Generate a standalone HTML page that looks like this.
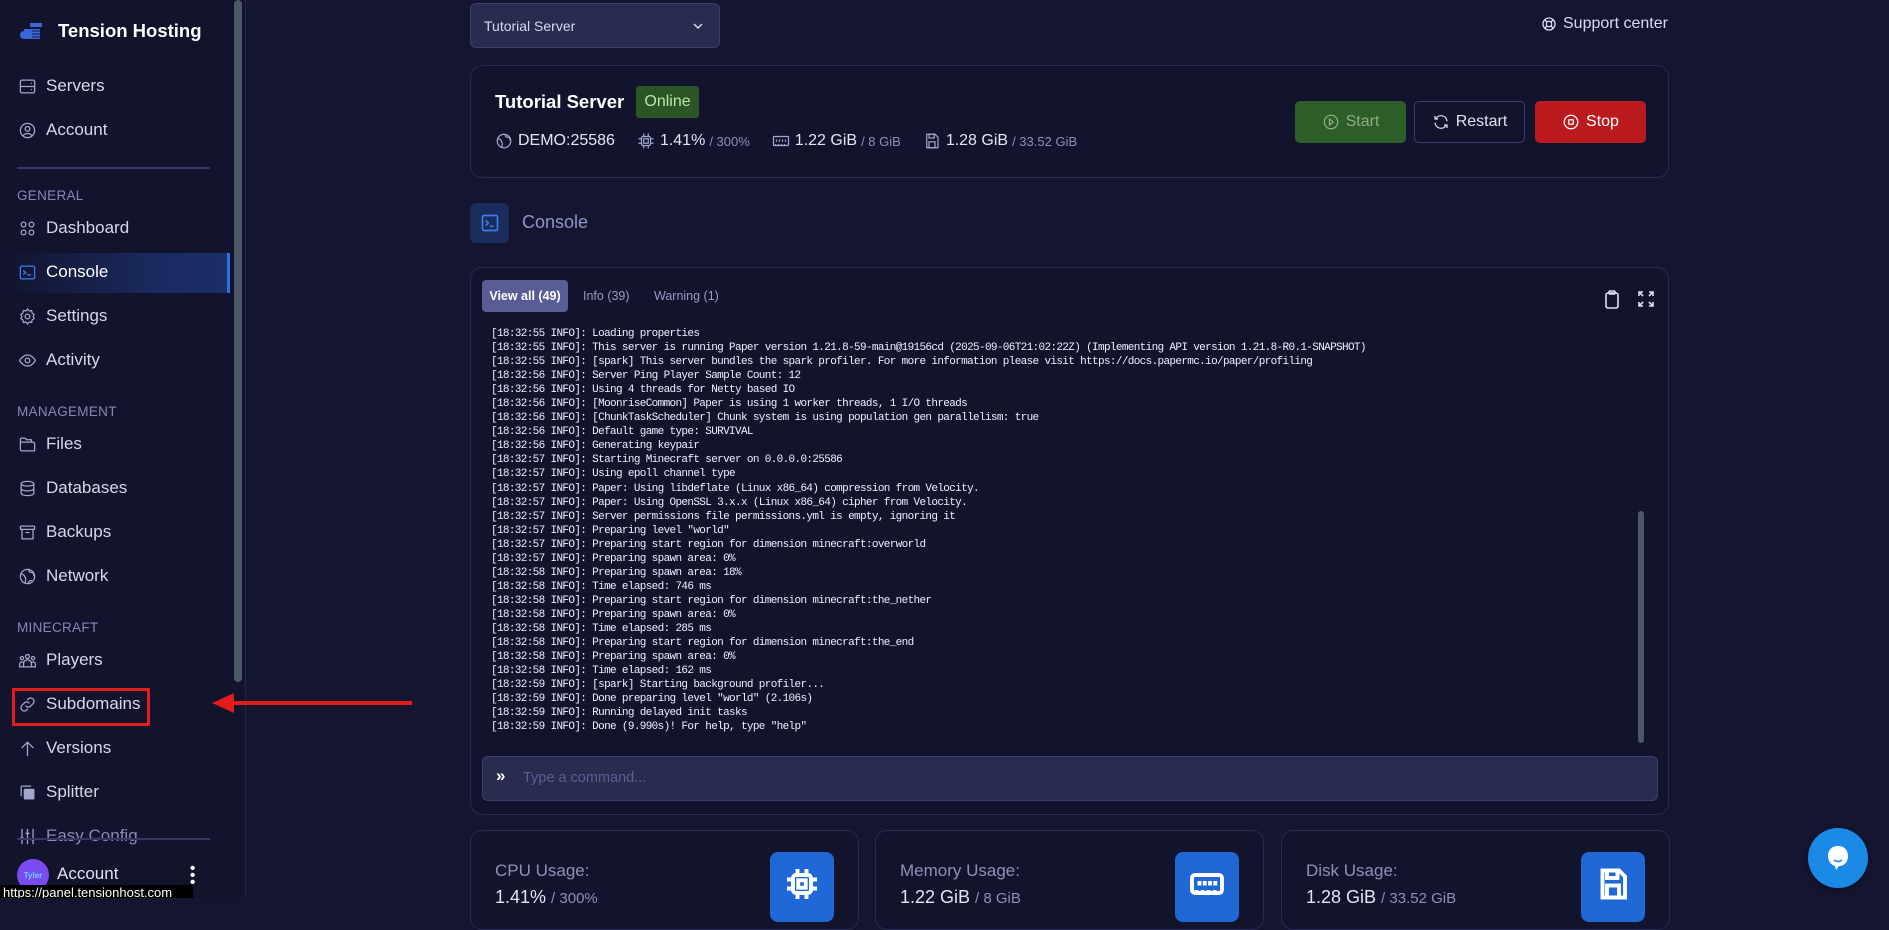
<!DOCTYPE html>
<html><head><meta charset="utf-8"><style>
*{box-sizing:border-box;margin:0;padding:0}
body{width:1889px;height:898px;overflow:hidden;background:#141631;font-family:"Liberation Sans",sans-serif;color:#e4e5f4;position:relative}
.a{position:absolute}
#sb{left:0;top:0;width:246px;height:898px;background:#12132c;border-right:1px solid #23254a}
.it{position:absolute;left:0;width:230px;height:40px;display:flex;align-items:center;padding-left:18px;font-size:17px;color:#d6d8ec}
.it svg{width:19px;height:19px;margin-right:9px;stroke:#a4a7cc;fill:none;stroke-width:1.6;stroke-linecap:round;stroke-linejoin:round}
.sec{position:absolute;left:17px;font-size:13.5px;color:#8688b4;letter-spacing:.3px}
.card{position:absolute;background:#12142e;border:1px solid #272a4e;border-radius:12px}
.st{display:flex;align-items:center;font-size:16px;color:#e4e5f4;margin-right:22px}
.st small{font-size:13px;color:#8e90b4;margin-left:4px}
.st svg{width:18px;height:18px;stroke:#a4a7cc;fill:none;stroke-width:1.6;margin-right:5px}
.btn{position:absolute;top:101px;height:42px;width:111px;border-radius:5px;display:flex;align-items:center;justify-content:center;font-size:16px}
.btn svg{width:18px;height:18px;fill:none;stroke-width:1.7;margin-right:6px}
#log{left:491px;top:327px;font-family:"Liberation Mono",monospace;font-size:11px;line-height:14.04px;letter-spacing:-.65px;color:#eef0ff;white-space:pre}
.sc{position:absolute;top:830px;height:100px;width:389px}
.sc .l{position:absolute;left:24px;top:30px;font-size:17px;color:#8e90b8}
.sc .v{position:absolute;left:24px;top:56px;font-size:18px;color:#e4e5f4}
.sc .v small{font-size:15px;color:#8e90b4}
.sc .ib{position:absolute;right:24px;top:21px;width:64px;height:70px;background:#2068d6;border-radius:8px;display:flex;justify-content:center;padding-top:14px}
.sc .ib svg{width:36px;height:36px;stroke:#fff;fill:none;stroke-width:2.6}
</style></head><body>
<div id="sb" class="a">
 <div class="a" style="left:20px;top:20px;display:flex;align-items:center">
  <svg width="24" height="20" viewBox="0 0 24 20"><path d="M4 8h16v10H4a4 4 0 0 1 0-8z" fill="#3a66d8"/><rect x="10" y="2" width="12" height="4" fill="#3a66d8"/><path d="M12 10h8M12 13h8M12 16h8" stroke="#1d2a66" stroke-width="1.3"/></svg>
  <span style="margin-left:14px;font-weight:bold;font-size:18.5px;color:#fff">Tension Hosting</span></div>
 <div class="it" style="top:66px"><svg viewBox="0 0 24 24"><rect x="3" y="4" width="18" height="16" rx="2"/><path d="M3 12h18M17 8h.01M17 16h.01"/></svg>Servers</div>
 <div class="it" style="top:110px"><svg viewBox="0 0 24 24"><circle cx="12" cy="12" r="9"/><circle cx="12" cy="10" r="3"/><path d="M6.5 18.5a7 7 0 0 1 11 0"/></svg>Account</div>
 <div class="a" style="left:17px;top:167px;width:193px;height:2px;background:#363862"></div>
 <div class="sec" style="top:188px">GENERAL</div>
 <div class="it" style="top:208px"><svg viewBox="0 0 24 24"><circle cx="7" cy="7" r="3"/><circle cx="17" cy="7" r="3"/><circle cx="7" cy="17" r="3"/><circle cx="17" cy="17" r="3"/></svg>Dashboard</div>
 <div class="a" style="left:0;top:253px;width:230px;height:40px;background:linear-gradient(90deg,#12132c 0%,#1a2a60 70%,#1b2e66 100%);border-right:3px solid #2f6ee6"></div>
 <div class="it" style="top:252px;color:#fff"><svg viewBox="0 0 24 24" style="stroke:#3d7cf0"><rect x="3" y="4" width="18" height="16" rx="2"/><path d="M7 10l3 2-3 2M12 15h4"/></svg>Console</div>
 <div class="it" style="top:296px"><svg viewBox="0 0 24 24"><circle cx="12" cy="12" r="3"/><path d="M12 2.5l2 2.5 3.2-.6.6 3.2 2.7 1.9-1.4 2.5 1.4 2.5-2.7 1.9-.6 3.2-3.2-.6-2 2.5-2-2.5-3.2.6-.6-3.2-2.7-1.9 1.4-2.5-1.4-2.5 2.7-1.9.6-3.2 3.2.6z"/></svg>Settings</div>
 <div class="it" style="top:340px"><svg viewBox="0 0 24 24"><path d="M2 12s4-7 10-7 10 7 10 7-4 7-10 7S2 12 2 12z"/><circle cx="12" cy="12" r="3"/></svg>Activity</div>
 <div class="sec" style="top:404px">MANAGEMENT</div>
 <div class="it" style="top:424px"><svg viewBox="0 0 24 24"><path d="M3 8V6a2 2 0 0 1 2-2h4l2 2h6v2M5 20a2 2 0 0 1-2-2V9h16a2 2 0 0 1 2 2v9z"/></svg>Files</div>
 <div class="it" style="top:468px"><svg viewBox="0 0 24 24"><ellipse cx="12" cy="6" rx="8" ry="3"/><path d="M4 6v12c0 1.7 3.6 3 8 3s8-1.3 8-3V6M4 12c0 1.7 3.6 3 8 3s8-1.3 8-3"/></svg>Databases</div>
 <div class="it" style="top:512px"><svg viewBox="0 0 24 24"><rect x="3" y="4" width="18" height="4" rx="1"/><path d="M5 8v12h14V8M10 12h4"/></svg>Backups</div>
 <div class="it" style="top:556px"><svg viewBox="0 0 24 24"><circle cx="12" cy="12" r="9"/><path d="M4 9c3 0 4 2 5 4s1 4 0 7M14 3c-1 3 1 4 3 4s3 2 3 4M13 21c0-3 2-4 4-4"/></svg>Network</div>
 <div class="sec" style="top:620px">MINECRAFT</div>
 <div class="it" style="top:640px"><svg viewBox="0 0 24 24"><circle cx="12" cy="7" r="2.5"/><circle cx="5" cy="9" r="2"/><circle cx="19" cy="9" r="2"/><path d="M7 20v-4a5 5 0 0 1 10 0v4zM2 20v-3a3 3 0 0 1 4-3M22 20v-3a3 3 0 0 0-4-3M2 20h20"/></svg>Players</div>
 <div class="it" style="top:684px"><svg viewBox="0 0 24 24"><path d="M10 14a4 4 0 0 0 6 0l3-3a4 4 0 0 0-6-6l-1 1M14 10a4 4 0 0 0-6 0l-3 3a4 4 0 0 0 6 6l1-1"/></svg>Subdomains</div>
 <div class="a" style="left:12px;top:688px;width:138px;height:38px;border:3px solid #e21b1b"></div>
 <div class="it" style="top:728px"><svg viewBox="0 0 24 24"><path d="M12 21V4M5 11l7-7 7 7"/></svg>Versions</div>
 <div class="it" style="top:772px"><svg viewBox="0 0 24 24"><path d="M4 16V5a1 1 0 0 1 1-1h11" /><rect x="8" y="8" width="12" height="12" rx="1" fill="#a4a7cc"/></svg>Splitter</div>
 <div class="it" style="top:816px;color:#8a8cb0"><svg viewBox="0 0 24 24"><path d="M5 3v18M12 3v18M19 3v18M3 14h4M10 8h4M17 16h4"/></svg>Easy Config</div>
 <div class="a" style="left:17px;top:838px;width:193px;height:2px;background:#363862"></div>
 <div class="a" style="left:17px;top:859px;width:32px;height:32px;border-radius:50%;background:#7a4cf0;font-size:8px;font-weight:bold;color:#6ad0ff;display:flex;align-items:center;justify-content:center">Tyler</div>
 <div class="a" style="left:57px;top:864px;font-size:17px;color:#e0e2f2">Account</div>
 <div class="a" style="left:190px;top:865px;width:4px;line-height:7px;font-size:15px;font-weight:bold;color:#fff">•<br>•<br>•</div>
 <div class="a" style="left:234px;top:0;width:8px;height:682px;border-radius:4px;background:#4d5867"></div>
</div>
<div class="a" style="left:0;top:885px;width:193px;height:13px;background:#000;color:#fff;font-size:13px;line-height:16px;padding-left:3px;overflow:hidden">https://panel.tensionhost.com</div>
<!-- red arrow -->
<svg class="a" style="left:210px;top:692px" width="205" height="22"><path d="M22 11H202" stroke="#e21b1b" stroke-width="4"/><path d="M2 11L24 1V21z" fill="#e21b1b"/></svg>

<!-- top -->
<div class="a" style="left:470px;top:3px;width:250px;height:45px;background:#292b4f;border:1px solid #3c3e6c;border-radius:6px;font-size:14px;color:#d8daf0;padding:14px 0 0 13px">Tutorial Server<svg class="a" style="left:222px;top:18px" width="10" height="8"><path d="M1 2l4 4 4-4" stroke="#d8daf0" stroke-width="1.5" fill="none"/></svg></div>
<div class="a" style="left:1541px;top:15px;font-size:16px;color:#d8daf0;display:flex;align-items:center"><svg width="16" height="16" viewBox="0 0 24 24" style="margin-right:6px;fill:none;stroke:#d8daf0;stroke-width:2"><circle cx="12" cy="12" r="9"/><circle cx="12" cy="12" r="4"/><path d="M5.6 5.6l3.6 3.6M18.4 5.6l-3.6 3.6M5.6 18.4l3.6-3.6M18.4 18.4l-3.6-3.6"/></svg>Support center</div>

<div class="card" style="left:470px;top:65px;width:1199px;height:113px"></div>
<div class="a" style="left:495px;top:91px;font-size:18.5px;font-weight:bold;color:#fff">Tutorial Server</div>
<div class="a" style="left:636px;top:86px;width:63px;height:32px;background:#2b5427;border-radius:3px;color:#b9e7a9;font-size:16px;display:flex;align-items:center;justify-content:center">Online</div>
<div class="a" style="left:495px;top:132px;display:flex">
 <div class="st"><svg viewBox="0 0 24 24"><circle cx="12" cy="12" r="9"/><path d="M4 9c3 0 4 2 5 4s1 4 0 7M14 3c-1 3 1 4 3 4s3 2 3 4"/></svg>DEMO:25586</div>
 <div class="st"><svg viewBox="0 0 24 24"><rect x="6" y="6" width="12" height="12" rx="2"/><rect x="9" y="9" width="6" height="6"/><path d="M9 2v4M15 2v4M9 18v4M15 18v4M2 9h4M2 15h4M18 9h4M18 15h4"/></svg>1.41%<small>/ 300%</small></div>
 <div class="st"><svg viewBox="0 0 24 24"><rect x="2" y="6" width="20" height="12" rx="1"/><path d="M6 10v3M10 10v3M14 10v3M18 10v3M5 18v-2M9 18v-2M13 18v-2M17 18v-2"/></svg>1.22 GiB<small>/ 8 GiB</small></div>
 <div class="st"><svg viewBox="0 0 24 24"><path d="M5 3h11l4 4v14H5z"/><rect x="8" y="3" width="7" height="5"/><rect x="8" y="13" width="8" height="8"/></svg>1.28 GiB<small>/ 33.52 GiB</small></div>
</div>
<div class="btn" style="left:1295px;background:#2d5e27;color:#8fa98a"><svg viewBox="0 0 24 24" stroke="#8fa98a"><circle cx="12" cy="12" r="9"/><path d="M10 8l5 4-5 4z"/></svg>Start</div>
<div class="btn" style="left:1414px;border:1px solid #3c3e6c;color:#e0e2f2"><svg viewBox="0 0 24 24" stroke="#e0e2f2"><path d="M20 11A8 8 0 0 0 5.5 7M4 4v4h4M4 13a8 8 0 0 0 14.5 4M20 20v-4h-4"/></svg>Restart</div>
<div class="btn" style="left:1535px;background:#bb1a1e;color:#fff"><svg viewBox="0 0 24 24" stroke="#fff"><circle cx="12" cy="12" r="9"/><rect x="9" y="9" width="6" height="6" rx="1"/></svg>Stop</div>

<div class="a" style="left:470px;top:203px;width:39px;height:40px;background:#1b2c5c;border-radius:6px"><svg style="margin:10px 0 0 10px" width="20" height="20" viewBox="0 0 24 24" fill="none" stroke="#3d7cf0" stroke-width="2"><rect x="3" y="3" width="18" height="18" rx="2"/><path d="M7 9l3 3-3 3M12 16h4"/></svg></div>
<div class="a" style="left:522px;top:212px;font-size:18px;color:#9294c6">Console</div>

<div class="card" style="left:470px;top:267px;width:1199px;height:548px"></div>
<div class="a" style="left:482px;top:280px;width:86px;height:32px;background:#5a5c96;border-radius:4px;color:#fff;font-size:12.5px;font-weight:bold;display:flex;align-items:center;justify-content:center">View all (49)</div>
<div class="a" style="left:583px;top:289px;font-size:12.5px;color:#9698c4">Info (39)</div>
<div class="a" style="left:654px;top:289px;font-size:12.5px;color:#9698c4">Warning (1)</div>
<svg class="a" style="left:1604px;top:290px" width="16" height="19" viewBox="0 0 16 19" fill="none" stroke="#e0e2f2" stroke-width="1.6"><rect x="2" y="3" width="12" height="15" rx="2"/><rect x="5" y="1" width="6" height="3" rx="1"/></svg>
<svg class="a" style="left:1638px;top:291px" width="16" height="16" viewBox="0 0 16 16" fill="none" stroke="#e0e2f2" stroke-width="1.6"><path d="M1 5V1h4M1 1l4 4M15 5V1h-4M15 1l-4 4M1 11v4h4M1 15l4-4M15 11v4h-4M15 15l-4-4"/></svg>
<div id="log" class="a">[18:32:55 INFO]: Loading properties
[18:32:55 INFO]: This server is running Paper version 1.21.8-59-main@19156cd (2025-09-06T21:02:22Z) (Implementing API version 1.21.8-R0.1-SNAPSHOT)
[18:32:55 INFO]: [spark] This server bundles the spark profiler. For more information please visit https://docs.papermc.io/paper/profiling
[18:32:56 INFO]: Server Ping Player Sample Count: 12
[18:32:56 INFO]: Using 4 threads for Netty based IO
[18:32:56 INFO]: [MoonriseCommon] Paper is using 1 worker threads, 1 I/O threads
[18:32:56 INFO]: [ChunkTaskScheduler] Chunk system is using population gen parallelism: true
[18:32:56 INFO]: Default game type: SURVIVAL
[18:32:56 INFO]: Generating keypair
[18:32:57 INFO]: Starting Minecraft server on 0.0.0.0:25586
[18:32:57 INFO]: Using epoll channel type
[18:32:57 INFO]: Paper: Using libdeflate (Linux x86_64) compression from Velocity.
[18:32:57 INFO]: Paper: Using OpenSSL 3.x.x (Linux x86_64) cipher from Velocity.
[18:32:57 INFO]: Server permissions file permissions.yml is empty, ignoring it
[18:32:57 INFO]: Preparing level "world"
[18:32:57 INFO]: Preparing start region for dimension minecraft:overworld
[18:32:57 INFO]: Preparing spawn area: 0%
[18:32:58 INFO]: Preparing spawn area: 18%
[18:32:58 INFO]: Time elapsed: 746 ms
[18:32:58 INFO]: Preparing start region for dimension minecraft:the_nether
[18:32:58 INFO]: Preparing spawn area: 0%
[18:32:58 INFO]: Time elapsed: 285 ms
[18:32:58 INFO]: Preparing start region for dimension minecraft:the_end
[18:32:58 INFO]: Preparing spawn area: 0%
[18:32:58 INFO]: Time elapsed: 162 ms
[18:32:59 INFO]: [spark] Starting background profiler...
[18:32:59 INFO]: Done preparing level "world" (2.106s)
[18:32:59 INFO]: Running delayed init tasks
[18:32:59 INFO]: Done (9.990s)! For help, type "help"</div>
<div class="a" style="left:1638px;top:511px;width:6px;height:232px;border-radius:3px;background:#4d5867"></div>
<div class="a" style="left:482px;top:756px;width:1176px;height:45px;background:#292b4f;border:1px solid #3c3e6c;border-radius:6px"></div>
<div class="a" style="left:496px;top:766px;font-size:17px;font-weight:bold;color:#fff">»</div>
<div class="a" style="left:523px;top:770px;font-size:14.5px;color:#5c5e94">Type a command...</div>

<div class="card sc" style="left:470px"><div class="l">CPU Usage:</div><div class="v">1.41% <small>/ 300%</small></div><div class="ib"><svg viewBox="0 0 24 24"><rect x="6" y="6" width="12" height="12" rx="2"/><rect x="9.5" y="9.5" width="5" height="5"/><path d="M9 2v4M15 2v4M9 18v4M15 18v4M2 9h4M2 15h4M18 9h4M18 15h4"/></svg></div></div>
<div class="card sc" style="left:875px"><div class="l">Memory Usage:</div><div class="v">1.22 GiB <small>/ 8 GiB</small></div><div class="ib"><svg viewBox="0 0 24 24"><rect x="2" y="6" width="20" height="12" rx="2"/><path d="M7 10v3M10.5 10v3M14 10v3M17.5 10v3M5 18v-2M9 18v-2M13 18v-2M17 18v-2"/></svg></div></div>
<div class="card sc" style="left:1281px"><div class="l">Disk Usage:</div><div class="v">1.28 GiB <small>/ 33.52 GiB</small></div><div class="ib"><svg viewBox="0 0 24 24"><path d="M5 3h11l4 4v14H5z"/><rect x="8" y="3" width="7" height="5"/><rect x="8" y="13" width="8" height="8"/></svg></div></div>

<div class="a" style="left:1808px;top:828px;width:60px;height:60px;border-radius:50%;background:#1a8ae6;box-shadow:0 2px 6px rgba(0,0,0,.4)"><svg style="margin:16px 0 0 17px" width="26" height="28" viewBox="0 0 26 28"><path d="M13 2C6 2 3 7 3 12c0 5 3 9 7 10l1 4 3-4c6 0 9-5 9-10S20 2 13 2z" fill="#fff"/><path d="M9 16q4 3 8 0" stroke="#1a8ae6" stroke-width="1.5" fill="none"/></svg></div>
</body></html>
